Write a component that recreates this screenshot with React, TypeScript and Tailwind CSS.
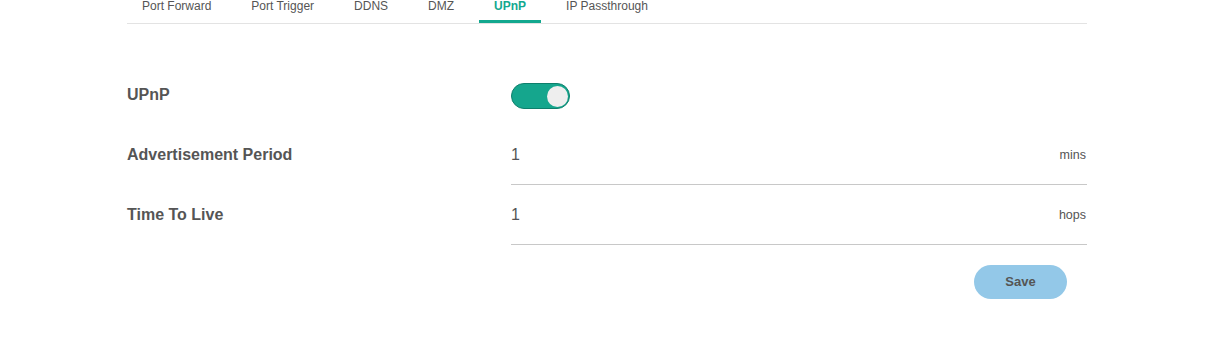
import React from "react";

const tabs = ["Port Forward", "Port Trigger", "DDNS", "DMZ", "UPnP", "IP Passthrough"];

export default function App() {
  return (
    <div className="w-[1222px] h-[361px] bg-white overflow-hidden" style={{ fontFamily: '"Liberation Sans", Arial, sans-serif' }}>
      <div className="w-[960px] ml-[127px]">
        <div className="flex gap-[10px] border-b border-[#e3e3e3]">
          {tabs.map((t) => (
            <div
              key={t}
              className={
                "px-[15px] h-[23px] text-[12px] leading-[12px] border-b-[3px] " +
                (t === "UPnP" ? "border-[#13a88f] text-[#13a88f] font-bold" : "border-transparent text-[#555]")
              }
            >
              {t}
            </div>
          ))}
        </div>

        <div className="mt-[41px]">
          <div className="flex h-[60px] items-center">
            <div className="w-[384px] text-[16px] font-bold text-[#555]">UPnP</div>
            <div className="w-[59px] h-[26px] rounded-full bg-[#15a68d] border border-[#0e7f6c] flex items-center justify-end pr-[1px] mt-[2px]">
              <div className="w-[21px] h-[21px] rounded-full bg-[#eeeeee]" />
            </div>
          </div>

          {[
            ["Advertisement Period", "1", "mins"],
            ["Time To Live", "1", "hops"],
          ].map(([label, val, unit]) => (
            <div key={label} className="flex h-[60px]">
              <div className="w-[384px] text-[16px] font-bold text-[#555] pt-[20px] leading-[20px]">{label}</div>
              <div className="flex-1 flex items-start justify-between border-b border-[#c8c8c8] pt-[20px] pr-[1px]">
                <span className="text-[16px] leading-[20px] text-[#555]">{val}</span>
                <span className="text-[12.5px] leading-[20px] text-[#555]">{unit}</span>
              </div>
            </div>
          ))}

          <div className="flex justify-end pr-[20px] mt-[20px]">
            <button className="w-[93px] h-[34px] rounded-full bg-[#93c8e8] text-[13px] font-bold text-[#555]">Save</button>
          </div>
        </div>
      </div>
    </div>
  );
}
